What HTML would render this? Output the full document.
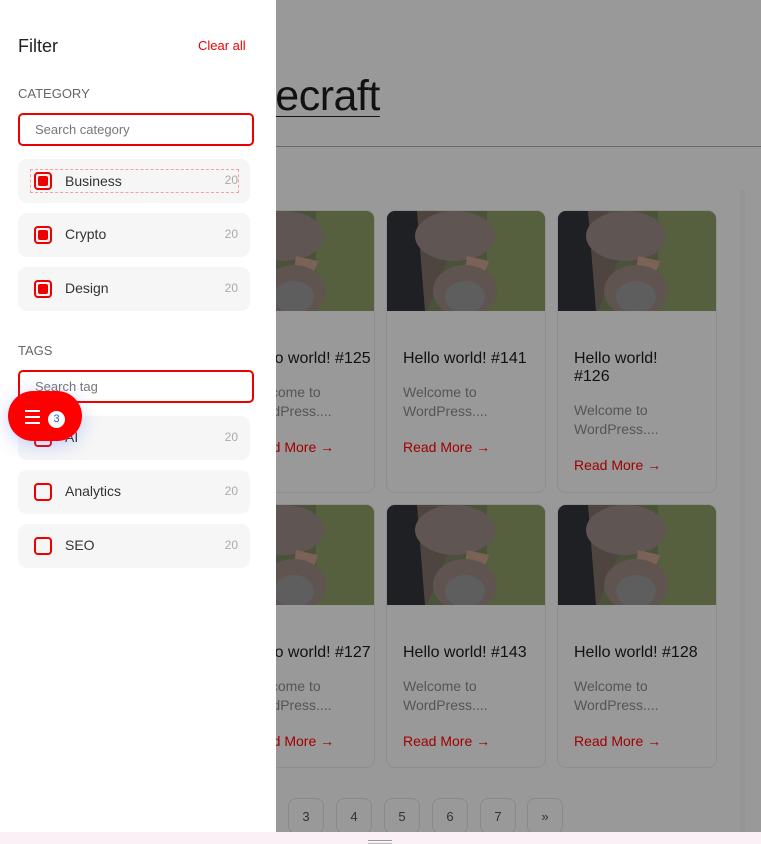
<!DOCTYPE html>
<html><head><meta charset="utf-8"><style>
*{box-sizing:border-box;margin:0;padding:0}
body{width:761px;height:844px;overflow:hidden;position:relative;font-family:"Liberation Sans",sans-serif;background:#999}
.main{position:absolute;left:0;top:0;width:761px;height:832px;background:#999;overflow:hidden}
.title{position:absolute;left:186px;top:72px;font-size:43px;color:#111;text-decoration:underline;text-decoration-thickness:1px;text-underline-offset:6px;letter-spacing:-0.5px}
.hr{position:absolute;left:0;top:146px;width:761px;height:1px;background:#6a6a6a}
.card{position:absolute;width:160px;border:1px solid #8e8e8e;border-radius:9px;overflow:hidden;background:#999}
.card svg{display:block}
.card h3{font-weight:normal;font-size:16px;color:#111;margin:39px 0 0 16px;line-height:18px;white-space:nowrap}
.card p{font-size:14px;color:#555;margin:15px 0 0 16px;line-height:19px;white-space:nowrap}
.card a{display:block;font-size:14px;color:#a00000;margin:18px 0 0 16px;white-space:nowrap}
.pg{position:absolute;top:798px;width:36px;height:36px;border:1px solid #888;border-radius:8px;font-size:13px;color:#333;text-align:center;line-height:36px}
.bar{position:absolute;left:0;top:832px;width:761px;height:12px;background:#fbf0f6}
.handle{position:absolute;left:368px;top:840px;width:24px;height:4px;border-top:1px solid #999;border-bottom:1px solid #bbb}
.drawer{position:absolute;left:0;top:0;width:276px;height:832px;background:#fff}
.h{position:absolute;left:18px;top:36px;font-size:18px;color:#222}
.clr{position:absolute;left:198px;top:38px;font-size:13px;color:#e00}
.lab{position:absolute;left:18px;font-size:13px;color:#666}
.inp{position:absolute;left:18px;width:236px;height:33px;border:2px solid #e00;border-radius:5px;font-size:13px;color:#777;padding:7px 0 0 15px}
.row{position:absolute;left:18px;width:232px;height:44px;background:#f6f6f6;border-radius:9px}
.cb{position:absolute;left:16px;top:13px;width:18px;height:18px;border:2px solid #e00;border-radius:4px}
.cb.on::after{content:"";position:absolute;left:2px;top:2px;width:10px;height:10px;background:#e00;border-radius:2px}
.rt{position:absolute;left:47px;top:13px;font-size:14px;color:#333}
.n{position:absolute;right:12px;top:14px;font-size:12px;color:#aaa}
.fab{position:absolute;left:8px;top:391px;width:74px;height:50px;border-radius:25px;background:#f00;box-shadow:0 4px 18px rgba(80,110,255,.3)}
.fab i{position:absolute;left:17px;width:15px;height:2px;background:#fff}
.fab b{position:absolute;left:40px;top:20px;width:17px;height:17px;border-radius:50%;background:#fff;color:#1a5fe0;font-size:11px;text-align:center;line-height:17px;font-weight:normal}
</style></head><body>
<div class="main">
<div class="title">Homecraft</div>
<div class="hr"></div>
<svg width="0" height="0" style="position:absolute"><defs>
<symbol id="im" viewBox="0 0 160 100">
<rect width="160" height="100" fill="#4a5239"/>
<rect x="100" width="60" height="100" fill="#56603f"/>
<path d="M30 0h20v20h40v30H60L40 100H0V0z" fill="#4f4540"/>
<path d="M0 0h30l8 100H0z" fill="#1f2023"/>
<ellipse cx="68" cy="25" rx="40" ry="25" fill="#5f5552"/>
<path d="M80 45l22 5 -4 12 -20-3z" fill="#7a6256"/>
<ellipse cx="78" cy="80" rx="32" ry="26" fill="#5f5450"/>
<ellipse cx="78" cy="86" rx="20" ry="16" fill="#5e5e5e"/>
</symbol></defs></svg>
<div class="card" style="left:215px;top:210px;height:283px"><svg width="160" height="100"><use href="#im"/></svg><h3 style="margin-left:31px">Hello world! #125</h3><p style="margin-left:31px">Welcome to<br>WordPress....</p><a style="margin-left:31px">Read More →</a></div>
<div class="card" style="left:386px;top:210px;height:283px"><svg width="160" height="100"><use href="#im"/></svg><h3>Hello world! #141</h3><p>Welcome to<br>WordPress....</p><a>Read More →</a></div>
<div class="card" style="left:557px;top:210px;height:283px"><svg width="160" height="100"><use href="#im"/></svg><h3>Hello world!<br>#126</h3><p>Welcome to<br>WordPress....</p><a>Read More →</a></div>
<div class="card" style="left:215px;top:504px;height:264px"><svg width="160" height="100"><use href="#im"/></svg><h3 style="margin-left:31px">Hello world! #127</h3><p style="margin-left:31px">Welcome to<br>WordPress....</p><a style="margin-left:31px">Read More →</a></div>
<div class="card" style="left:386px;top:504px;height:264px"><svg width="160" height="100"><use href="#im"/></svg><h3>Hello world! #143</h3><p>Welcome to<br>WordPress....</p><a>Read More →</a></div>
<div class="card" style="left:557px;top:504px;height:264px"><svg width="160" height="100"><use href="#im"/></svg><h3>Hello world! #128</h3><p>Welcome to<br>WordPress....</p><a>Read More →</a></div>
<div class="pg" style="left:240px">2</div>
<div class="pg" style="left:288px">3</div>
<div class="pg" style="left:336px">4</div>
<div class="pg" style="left:384px">5</div>
<div class="pg" style="left:432px">6</div>
<div class="pg" style="left:480px">7</div>
<div class="pg" style="left:527px">»</div>
<div style="position:absolute;left:740px;top:190px;width:5px;height:642px;background:#949494"></div>
</div>
<div class="drawer">
<div class="h">Filter</div><div class="clr">Clear all</div>
<div class="lab" style="top:86px">CATEGORY</div>
<div class="inp" style="top:113px">Search category</div>
<div class="row" style="top:159px"><div class="cb on"></div><div class="rt" style="top:14px">Business</div><div class="n">20</div>
<div style="position:absolute;left:12px;top:10px;width:209px;height:24px;border:1px dashed #f4a0a0"></div></div>
<div class="row" style="top:213px"><div class="cb on"></div><div class="rt">Crypto</div><div class="n">20</div></div>
<div class="row" style="top:267px"><div class="cb on"></div><div class="rt">Design</div><div class="n">20</div></div>
<div class="lab" style="top:343px">TAGS</div>
<div class="inp" style="top:370px">Search tag</div>
<div class="row" style="top:416px"><div class="cb"></div><div class="rt">AI</div><div class="n">20</div></div>
<div class="row" style="top:470px"><div class="cb"></div><div class="rt">Analytics</div><div class="n">20</div></div>
<div class="row" style="top:524px"><div class="cb"></div><div class="rt">SEO</div><div class="n">20</div></div>
<div class="fab"><i style="top:19px"></i><i style="top:25px"></i><i style="top:31px"></i><b>3</b></div>
</div>
<div class="bar"></div><div class="handle"></div>
</body></html>
